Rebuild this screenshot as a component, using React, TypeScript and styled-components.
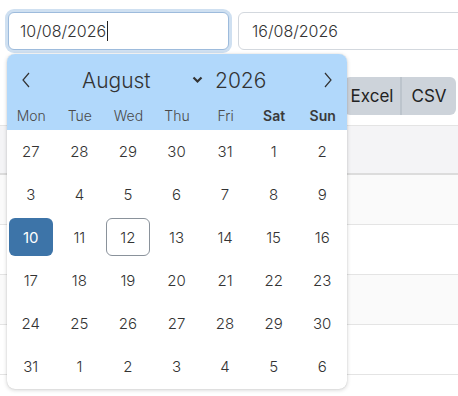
import React from "react";
import styled, { createGlobalStyle } from "styled-components";

const Global = createGlobalStyle`
  html, body { margin: 0; padding: 0; background: #fff; }
  body { font-family: Inter, "Noto Sans", sans-serif; color: #333; }
  * { box-sizing: border-box; }
`;

const Page = styled.div`
  position: relative;
  width: 458px;
  height: 396px;
  overflow: hidden;
`;

const DateRow = styled.div`
  display: flex;
  gap: 9px;
  padding: 12px 0 0 8px;
`;

const DateField = styled.div<{ $focused?: boolean; $width: number }>`
  flex: 0 0 ${(p) => p.$width}px;
  height: 38px;
  border: 1px solid ${(p) => (p.$focused ? "#9dbbdc" : "#d3d8de")};
  border-radius: 6px;
  box-shadow: ${(p) => (p.$focused ? "0 0 0 3px #cfe0f1" : "none")};
  display: flex;
  align-items: center;
  padding-left: ${(p) => (p.$focused ? 11 : 13)}px;
  font-size: 16px;
  font-weight: 300;
  color: #333;
  background: #fff;
`;

const Caret = styled.span`
  display: inline-block;
  width: 1px;
  height: 20px;
  background: #222;
  margin-left: 1px;
`;

const Toolbar = styled.div`
  display: flex;
  justify-content: flex-end;
  padding: 27px 2px 0 0;
`;

const ButtonGroup = styled.div`
  display: flex;
  border-radius: 6px;
  overflow: hidden;
`;

const ExportButton = styled.div<{ $width: number }>`
  width: ${(p) => p.$width}px;
  height: 38px;
  background: #cdd3da;
  display: flex;
  align-items: center;
  justify-content: center;
  font-size: 17px;
  color: #222;
  & + & {
    border-left: 2px solid #bcc4cc;
  }
`;

const Table = styled.div`
  margin-top: 10px;
  border-top: 1px solid #e4e4e4;
`;

const HeadRow = styled.div`
  height: 49px;
  background: #f4f4f6;
  border-bottom: 2px solid #dcdcdc;
`;

const BodyRow = styled.div<{ $striped?: boolean }>`
  height: 50px;
  background: ${(p) => (p.$striped ? "#fafafa" : "#fff")};
  border-bottom: 1px solid #e4e4e4;
`;

const Popup = styled.div`
  position: absolute;
  left: 7px;
  top: 54px;
  width: 340px;
  height: 335px;
  background: #fff;
  border-radius: 8px;
  box-shadow: 0 1px 4px rgba(0, 0, 0, 0.18), 0 0 1px rgba(0, 0, 0, 0.2);
  overflow: hidden;
`;

const Header = styled.div`
  background: #b1d8fb;
  height: 76px;
  display: flex;
  flex-direction: column;
`;

const MonthBar = styled.div`
  height: 52px;
  display: flex;
  align-items: center;
  padding: 0 0 0 13px;
`;

const NavArrow = styled.div`
  width: 12px;
  height: 20px;
  display: flex;
  align-items: center;
  justify-content: center;
  color: #333;
`;

const MonthGroup = styled.div`
  display: flex;
  align-items: center;
  margin-left: 50px;
  font-size: 21px;
  color: #333;
  font-weight: 300;
`;

const MonthName = styled.span`
  width: 110px;
`;

const YearLabel = styled.span`
  margin-left: 12px;
`;

const NextArrow = styled(NavArrow)`
  margin-left: 56px;
`;

const WeekRow = styled.div`
  display: grid;
  grid-template-columns: repeat(7, 1fr);
  height: 24px;
  padding-top: 1px;
  align-items: start;
`;

const WeekDay = styled.div<{ $weekend?: boolean }>`
  text-align: center;
  font-size: 14px;
  font-weight: ${(p) => (p.$weekend ? 600 : 300)};
  color: ${(p) => (p.$weekend ? "#3a3a3a" : "#4a4a4a")};
  line-height: 18px;
`;

const DaysGrid = styled.div`
  display: grid;
  grid-template-columns: repeat(7, 1fr);
  grid-auto-rows: 43px;
`;

const DayCell = styled.div`
  display: flex;
  padding: 2px 3px 3px 2px;
`;

const Day = styled.div<{ $selected?: boolean; $today?: boolean }>`
  flex: 1;
  display: flex;
  align-items: center;
  justify-content: center;
  border-radius: 6px;
  font-size: 15px;
  font-weight: ${(p) => (p.$selected ? 400 : 300)};
  color: ${(p) => (p.$selected ? "#fff" : "#333")};
  background: ${(p) => (p.$selected ? "#3d74a8" : "transparent")};
  border: 1px solid ${(p) => (p.$today ? "#8a929b" : "transparent")};
`;

const Chevron = ({ dir }: { dir: "left" | "right" }) => (
  <svg width="10" height="16" viewBox="0 0 10 16">
    <polyline
      points={dir === "left" ? "8,1 2,8 8,15" : "2,1 8,8 2,15"}
      fill="none"
      stroke="#333"
      strokeWidth="1.2"
    />
  </svg>
);

const SelectCaret = () => (
  <svg width="11" height="8" viewBox="0 0 11 8">
    <polyline points="1.5,1.5 5.5,5.5 9.5,1.5" fill="none" stroke="#333" strokeWidth="2.2" />
  </svg>
);

const weekdays = ["Mon", "Tue", "Wed", "Thu", "Fri", "Sat", "Sun"];

const days: number[] = [
  27, 28, 29, 30, 31, 1, 2,
  3, 4, 5, 6, 7, 8, 9,
  10, 11, 12, 13, 14, 15, 16,
  17, 18, 19, 20, 21, 22, 23,
  24, 25, 26, 27, 28, 29, 30,
  31, 1, 2, 3, 4, 5, 6,
];

export default function App() {
  return (
    <Page>
      <Global />
      <DateRow>
        <DateField $focused $width={221}>
          10/08/2026
          <Caret />
        </DateField>
        <DateField $width={240}>16/08/2026</DateField>
      </DateRow>
      <Toolbar>
        <ButtonGroup>
          <ExportButton $width={56}>Excel</ExportButton>
          <ExportButton $width={56}>CSV</ExportButton>
        </ButtonGroup>
      </Toolbar>
      <Table>
        <HeadRow />
        <BodyRow $striped />
        <BodyRow />
        <BodyRow $striped />
        <BodyRow />
      </Table>
      <Popup>
        <Header>
          <MonthBar>
            <NavArrow>
              <Chevron dir="left" />
            </NavArrow>
            <MonthGroup>
              <MonthName>August</MonthName>
              <SelectCaret />
              <YearLabel>2026</YearLabel>
            </MonthGroup>
            <NextArrow>
              <Chevron dir="right" />
            </NextArrow>
          </MonthBar>
          <WeekRow>
            {weekdays.map((d, i) => (
              <WeekDay key={d} $weekend={i >= 5}>
                {d}
              </WeekDay>
            ))}
          </WeekRow>
        </Header>
        <DaysGrid>
          {days.map((d, i) => (
            <DayCell key={i}>
              <Day $selected={i === 14} $today={i === 16}>
                {d}
              </Day>
            </DayCell>
          ))}
        </DaysGrid>
      </Popup>
    </Page>
  );
}
